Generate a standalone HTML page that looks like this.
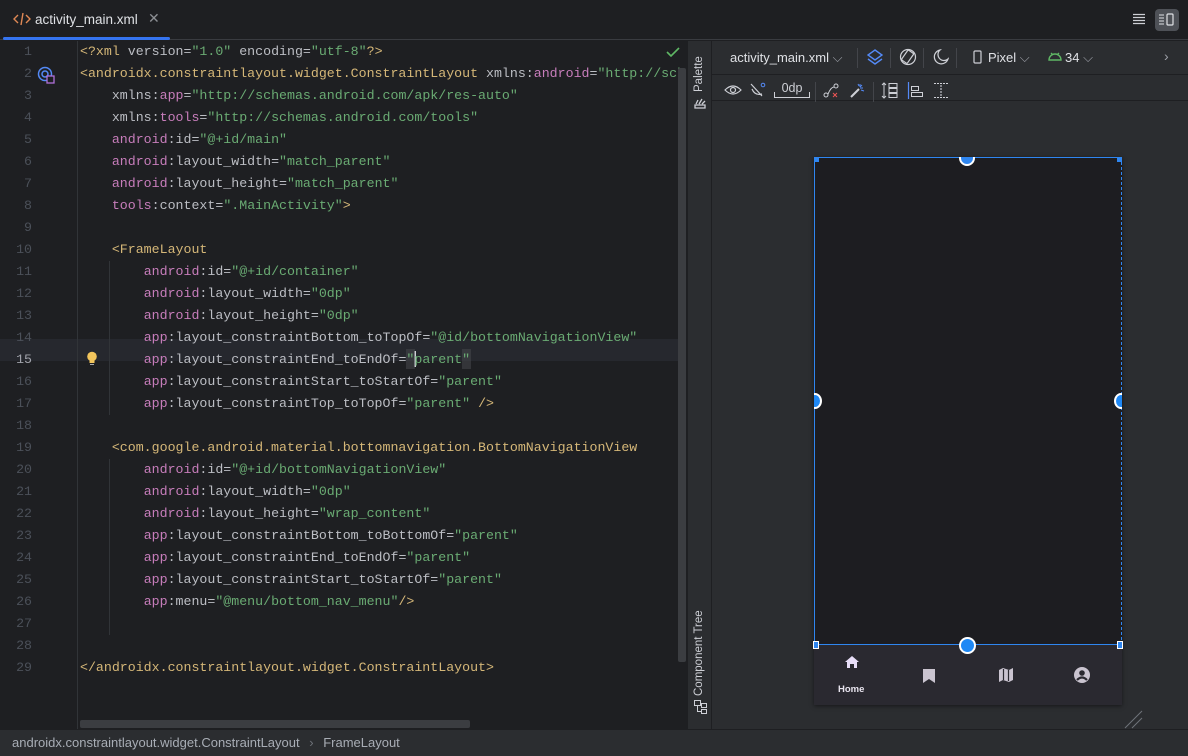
<!DOCTYPE html>
<html><head><meta charset="utf-8"><style>
*{margin:0;padding:0;box-sizing:border-box}
body{width:1188px;height:756px;background:#1e1f22;overflow:hidden;position:relative;font-family:"Liberation Sans",sans-serif;color:#dfe1e5}
.abs{position:absolute}
#tabs{left:0;top:0;width:1188px;height:40px;background:#1e1f22;border-bottom:1px solid #393b40}
#tab{left:3px;top:0;width:167px;height:40px}
#tab .ul{position:absolute;left:0;bottom:0;width:167px;height:3px;background:#3574f0;border-radius:2px}
#code{left:0;top:41px;width:686px;height:688px;overflow:hidden;font-family:"Liberation Mono",monospace;font-size:13.27px}
.ln{position:absolute;left:0;width:686px;height:22px;line-height:22px;white-space:pre}
.num{position:absolute;right:654px;width:40px;text-align:right;color:#4b5059}
.txt{position:absolute;left:80px;color:#bcbec4}
.t{color:#d5b778}.ns{color:#c77dbb}.s{color:#6aab73}
.g{position:absolute;width:1px;background:#313438}
#strip{left:687px;top:41px;width:25px;height:688px;background:#2b2d30;border-left:1px solid #1e1f22;border-right:1px solid #1e1f22}
#design{left:712px;top:41px;width:476px;height:688px;background:#2b2d30}
.vt{position:absolute;transform:rotate(-90deg);transform-origin:left top;font-size:11.5px;color:#ced0d6;white-space:nowrap}
#status{left:0;top:729px;width:1188px;height:27px;background:#2b2d30;border-top:1px solid #1e1f22;font-size:13px;color:#a8adb5;line-height:26px;padding-left:12px}
.tb{font-size:13px;color:#dfe1e5}
</style></head><body>
<div id="tabs" class="abs">
 <div id="tab" class="abs">
  <svg class="abs" style="left:10px;top:12px" width="18" height="14" viewBox="0 0 18 14"><path d="M5 3 L1 7 L5 11 M13 3 L17 7 L13 11 M10 1 L8 13" fill="none" stroke="#e08855" stroke-width="1.4"/></svg>
  <div class="abs" style="left:32px;top:12px;font-size:13.5px;color:#dfe1e5">activity_main.xml</div>
  <div class="abs" style="left:145px;top:10px;font-size:14px;color:#8c8f94">✕</div>
  <div class="ul"></div>
 </div>
 <svg class="abs" style="left:1133px;top:13px" width="12" height="12"><path d="M0 1.5h12M0 4.5h12M0 7.5h12M0 10.5h12" stroke="#ced0d6" stroke-width="1.2"/></svg>
 <div class="abs" style="left:1155px;top:9px;width:24px;height:22px;background:#4e5157;border-radius:4px"></div>
 <svg class="abs" style="left:1159px;top:13px" width="16" height="14"><path d="M0 2h5M0 5h5M0 8h5M0 11h5" stroke="#dfe1e5" stroke-width="1.1"/><rect x="8" y="1" width="6" height="11" rx="1" fill="none" stroke="#dfe1e5" stroke-width="1.2"/></svg>
</div>

<div id="code" class="abs">
 <div class="ln" style="top:298px;background:#26282e"></div>
 <div class="g" style="left:77px;top:0;height:688px"></div>
 <div class="g" style="left:109px;top:220px;height:154px"></div>
 <div class="g" style="left:109px;top:418px;height:176px"></div>
 <div class="abs" style="left:80px;top:679px;width:390px;height:8px;background:#3b3d41;border-radius:2px"></div>
 <svg class="abs" style="left:666px;top:6px" width="14" height="10"><path d="M1 5 L5 9 L13 1" fill="none" stroke="#5fb865" stroke-width="1.6"/></svg>
 <svg class="abs" style="left:37px;top:25px" width="18" height="18"><circle cx="8" cy="8" r="6.5" fill="none" stroke="#548af7" stroke-width="1.5"/><circle cx="8" cy="8" r="3" fill="none" stroke="#548af7" stroke-width="1.5"/><rect x="10" y="10" width="7" height="7" fill="#1e1f22" stroke="#b070d8" stroke-width="1.3"/></svg>
 <svg class="abs" style="left:86px;top:310px" width="12" height="16"><circle cx="6" cy="5.5" r="4.8" fill="#f2c55c"/><rect x="3.5" y="9" width="5" height="3" fill="#f2c55c"/><path d="M4 13.5h4" stroke="#aaa" stroke-width="1"/></svg>
 <div class="abs" style="left:414px;top:310px;width:1.5px;height:16px;background:#ced0d6"></div>
 <div class="abs" style="left:406px;top:308px;width:9px;height:20px;background:#43454a;opacity:.6"></div>
 <div class="abs" style="left:462px;top:308px;width:9px;height:20px;background:#43454a;opacity:.6"></div>
</div>
<div id="lines" class="abs" style="left:0;top:41px;width:686px;height:688px;overflow:hidden;font-family:'Liberation Mono',monospace;font-size:13.27px">
<div class="ln" style="top:0"><span class="num">1</span><span class="txt"><span class="t">&lt;?xml </span>version=<span class="s">"1.0"</span> encoding=<span class="s">"utf-8"</span><span class="t">?&gt;</span></span></div>
<div class="ln" style="top:22px"><span class="num">2</span><span class="txt"><span class="t">&lt;androidx.constraintlayout.widget.ConstraintLayout </span>xmlns:<span class="ns">android</span>=<span class="s">"http://schemas.android.com/apk/res/android"</span></span></div>
<div class="ln" style="top:44px"><span class="num">3</span><span class="txt">    xmlns:<span class="ns">app</span>=<span class="s">"http://schemas.android.com/apk/res-auto"</span></span></div>
<div class="ln" style="top:66px"><span class="num">4</span><span class="txt">    xmlns:<span class="ns">tools</span>=<span class="s">"http://schemas.android.com/tools"</span></span></div>
<div class="ln" style="top:88px"><span class="num">5</span><span class="txt">    <span class="ns">android</span>:id=<span class="s">"@+id/main"</span></span></div>
<div class="ln" style="top:110px"><span class="num">6</span><span class="txt">    <span class="ns">android</span>:layout_width=<span class="s">"match_parent"</span></span></div>
<div class="ln" style="top:132px"><span class="num">7</span><span class="txt">    <span class="ns">android</span>:layout_height=<span class="s">"match_parent"</span></span></div>
<div class="ln" style="top:154px"><span class="num">8</span><span class="txt">    <span class="ns">tools</span>:context=<span class="s">".MainActivity"</span><span class="t">&gt;</span></span></div>
<div class="ln" style="top:176px"><span class="num">9</span></div>
<div class="ln" style="top:198px"><span class="num">10</span><span class="txt">    <span class="t">&lt;FrameLayout</span></span></div>
<div class="ln" style="top:220px"><span class="num">11</span><span class="txt">        <span class="ns">android</span>:id=<span class="s">"@+id/container"</span></span></div>
<div class="ln" style="top:242px"><span class="num">12</span><span class="txt">        <span class="ns">android</span>:layout_width=<span class="s">"0dp"</span></span></div>
<div class="ln" style="top:264px"><span class="num">13</span><span class="txt">        <span class="ns">android</span>:layout_height=<span class="s">"0dp"</span></span></div>
<div class="ln" style="top:286px"><span class="num">14</span><span class="txt">        <span class="ns">app</span>:layout_constraintBottom_toTopOf=<span class="s">"@id/bottomNavigationView"</span></span></div>
<div class="ln" style="top:308px"><span class="num" style="color:#a1a3ab">15</span><span class="txt">        <span class="ns">app</span>:layout_constraintEnd_toEndOf=<span class="s">"parent"</span></span></div>
<div class="ln" style="top:330px"><span class="num">16</span><span class="txt">        <span class="ns">app</span>:layout_constraintStart_toStartOf=<span class="s">"parent"</span></span></div>
<div class="ln" style="top:352px"><span class="num">17</span><span class="txt">        <span class="ns">app</span>:layout_constraintTop_toTopOf=<span class="s">"parent"</span> <span class="t">/&gt;</span></span></div>
<div class="ln" style="top:374px"><span class="num">18</span></div>
<div class="ln" style="top:396px"><span class="num">19</span><span class="txt">    <span class="t">&lt;com.google.android.material.bottomnavigation.BottomNavigationView</span></span></div>
<div class="ln" style="top:418px"><span class="num">20</span><span class="txt">        <span class="ns">android</span>:id=<span class="s">"@+id/bottomNavigationView"</span></span></div>
<div class="ln" style="top:440px"><span class="num">21</span><span class="txt">        <span class="ns">android</span>:layout_width=<span class="s">"0dp"</span></span></div>
<div class="ln" style="top:462px"><span class="num">22</span><span class="txt">        <span class="ns">android</span>:layout_height=<span class="s">"wrap_content"</span></span></div>
<div class="ln" style="top:484px"><span class="num">23</span><span class="txt">        <span class="ns">app</span>:layout_constraintBottom_toBottomOf=<span class="s">"parent"</span></span></div>
<div class="ln" style="top:506px"><span class="num">24</span><span class="txt">        <span class="ns">app</span>:layout_constraintEnd_toEndOf=<span class="s">"parent"</span></span></div>
<div class="ln" style="top:528px"><span class="num">25</span><span class="txt">        <span class="ns">app</span>:layout_constraintStart_toStartOf=<span class="s">"parent"</span></span></div>
<div class="ln" style="top:550px"><span class="num">26</span><span class="txt">        <span class="ns">app</span>:menu=<span class="s">"@menu/bottom_nav_menu"</span><span class="t">/&gt;</span></span></div>
<div class="ln" style="top:572px"><span class="num">27</span></div>
<div class="ln" style="top:594px"><span class="num">28</span></div>
<div class="ln" style="top:616px"><span class="num">29</span><span class="txt"><span class="t">&lt;/androidx.constraintlayout.widget.ConstraintLayout&gt;</span></span></div>
</div>
<div class="abs" style="left:678px;top:68px;width:8px;height:594px;background:#3b3d41;border-radius:2px"></div>

<div id="strip" class="abs">
 <div class="vt" style="left:5px;top:51px">Palette</div>
 <svg class="abs" style="left:6px;top:56px" width="12" height="12"><path d="M1 11h10v-3h-10z M2 7l2-4 M5 7l3-5 M8 7l3-3" stroke="#ced0d6" stroke-width="1.3" fill="none"/></svg>
 <div class="vt" style="left:5px;top:655px">Component Tree</div>
 <svg class="abs" style="left:6px;top:659px" width="14" height="14"><rect x="0.5" y="0.5" width="6" height="5" fill="none" stroke="#ced0d6"/><rect x="7.5" y="3.5" width="5" height="4" fill="none" stroke="#ced0d6"/><rect x="7.5" y="9.5" width="5" height="4" fill="none" stroke="#ced0d6"/><path d="M3.5 6v5.5h4" fill="none" stroke="#ced0d6"/></svg>
</div>

<div id="design" class="abs">
 <div class="abs" style="left:0;top:0;width:476px;height:34px;border-bottom:1px solid #1e1f22"></div>
 <div class="abs" style="left:0;top:34px;width:476px;height:26px;border-bottom:1px solid #1e1f22"></div>
 <div class="abs tb" style="left:18px;top:9px">activity_main.xml <span style="color:#9da0a8">⌵</span></div>
 <div class="abs" style="left:145px;top:7px;width:1px;height:20px;background:#43454a"></div>
 <svg class="abs" style="left:155px;top:8px" width="16" height="18"><path d="M8 1L15 6L8 11L1 6Z" fill="none" stroke="#548af7" stroke-width="1.4"/><path d="M1 10L8 15L15 10" fill="none" stroke="#548af7" stroke-width="1.4"/></svg>
 <div class="abs" style="left:178px;top:7px;width:1px;height:20px;background:#43454a"></div>
 <svg class="abs" style="left:187px;top:7px" width="18" height="18"><circle cx="9" cy="9" r="7.5" fill="none" stroke="#ced0d6" stroke-width="1.2"/><rect x="5" y="3" width="7" height="12" rx="1" transform="rotate(35 9 9)" fill="none" stroke="#ced0d6" stroke-width="1.2"/></svg>
 <div class="abs" style="left:211px;top:7px;width:1px;height:20px;background:#43454a"></div>
 <svg class="abs" style="left:221px;top:8px" width="16" height="16"><path d="M7 1A7 7 0 1 0 15 10A6 6 0 0 1 7 1Z" fill="none" stroke="#ced0d6" stroke-width="1.2"/></svg>
 <div class="abs" style="left:244px;top:7px;width:1px;height:20px;background:#43454a"></div>
 <svg class="abs" style="left:261px;top:9px" width="10" height="15"><rect x="1" y="1" width="7" height="12" rx="1" fill="none" stroke="#ced0d6" stroke-width="1.2"/></svg>
 <div class="abs tb" style="left:276px;top:9px">Pixel <span style="color:#9da0a8">⌵</span></div>
 <svg class="abs" style="left:336px;top:10px" width="14" height="10"><path d="M1 9a6 6 0 0 1 12 0z" fill="none" stroke="#5fb865" stroke-width="1.4"/><path d="M3 2l2 2M11 2l-2 2" stroke="#5fb865" stroke-width="1.3"/></svg>
 <div class="abs tb" style="left:353px;top:9px">34 <span style="color:#9da0a8">⌵</span></div>
 <div class="abs" style="left:452px;top:7px;font-size:14px;color:#9da0a8">›</div>
 <svg class="abs" style="left:12px;top:42px" width="18" height="14"><path d="M1 7Q9 -1 17 7Q9 15 1 7Z" fill="none" stroke="#ced0d6" stroke-width="1.2"/><circle cx="9" cy="7" r="2.5" fill="none" stroke="#ced0d6" stroke-width="1.2"/></svg>
 <svg class="abs" style="left:38px;top:41px" width="16" height="16"><path d="M1 2L12 14M2 7Q5 14 12 12" fill="none" stroke="#ced0d6" stroke-width="1.2"/><circle cx="13" cy="3" r="1.8" fill="none" stroke="#548af7"/></svg>
 <div class="abs" style="left:62px;top:40px;width:36px;height:17px;border-bottom:1px solid #ced0d6;font-size:12.5px;color:#ced0d6;text-align:center">0dp</div>
 <div class="abs" style="left:62px;top:51px;width:1px;height:6px;background:#ced0d6"></div><div class="abs" style="left:97px;top:51px;width:1px;height:6px;background:#ced0d6"></div>
 <div class="abs" style="left:103px;top:41px;width:1px;height:20px;background:#43454a"></div>
 <svg class="abs" style="left:111px;top:42px" width="16" height="16"><circle cx="3" cy="12" r="2" fill="none" stroke="#ced0d6"/><circle cx="13" cy="3" r="2" fill="none" stroke="#ced0d6"/><path d="M5 11Q8 4 11 4" fill="none" stroke="#ced0d6"/><path d="M10 10l4 4M14 10l-4 4" stroke="#e55"/></svg>
 <svg class="abs" style="left:137px;top:42px" width="16" height="16"><path d="M2 14L10 6" stroke="#ced0d6" stroke-width="2"/><path d="M11 1v3M14 5h-3M13 2l-2 2M9 1l1 2M15 8l-3-1" stroke="#548af7"/></svg>
 <div class="abs" style="left:161px;top:41px;width:1px;height:20px;background:#43454a"></div>
 <svg class="abs" style="left:169px;top:41px" width="18" height="18"><path d="M3 1v15M1 3l2-2 2 2M1 14l2 2 2-2" fill="none" stroke="#ced0d6"/><rect x="8" y="1.5" width="8" height="4" fill="none" stroke="#ced0d6"/><rect x="8" y="6.5" width="8" height="4" fill="none" stroke="#ced0d6"/><rect x="8" y="11.5" width="8" height="4" fill="none" stroke="#ced0d6"/></svg>
 <svg class="abs" style="left:195px;top:41px" width="18" height="18"><path d="M1.5 0v17" stroke="#548af7" stroke-width="1.2"/><rect x="4.5" y="4.5" width="7" height="4" fill="none" stroke="#ced0d6"/><rect x="4.5" y="10.5" width="11" height="4" fill="none" stroke="#ced0d6"/></svg>
 <svg class="abs" style="left:221px;top:41px" width="18" height="18"><path d="M1 1.5h14M1 15.5h14M8 3v11" stroke="#ced0d6" stroke-dasharray="2 1" stroke-width="1.1"/></svg>
 <div class="abs" style="left:102px;top:116px;width:308px;height:548px;background:#1d1d21;box-shadow:0 1px 4px rgba(0,0,0,.5)"></div>
 <div class="abs" style="left:102px;top:604px;width:308px;height:60px;background:#2a2930"></div>
 <div class="abs" style="left:102px;top:116px;width:308px;height:488px;border:1px solid #2f86f0;border-right:1px dashed #2f86f0"></div>
 <div class="abs" style="left:102px;top:116px;width:5px;height:5px;background:#2f86f0"></div>
 <div class="abs" style="left:405px;top:116px;width:5px;height:5px;background:#2f86f0"></div>
 <div class="abs" style="left:101px;top:600px;width:6px;height:8px;background:#2f86f0;border:1px solid #fff"></div>
 <div class="abs" style="left:405px;top:600px;width:6px;height:8px;background:#2f86f0;border:1px solid #fff"></div>
 <div class="abs" style="left:247px;top:109px;width:16px;height:16px;border-radius:50%;background:#2f86f0;border:2px solid #fff;clip-path:inset(7px 0 0 0)"></div>
 <div class="abs" style="left:247px;top:596px;width:17px;height:17px;border-radius:50%;background:#1e88f5;border:2px solid #fff"></div>
 <div class="abs" style="left:96px;top:352px;width:14px;height:16px;border-radius:50%;background:#1e88f5;border:2px solid #fff;clip-path:inset(0 0 0 6px)"></div>
 <div class="abs" style="left:402px;top:352px;width:14px;height:16px;border-radius:50%;background:#1e88f5;border:2px solid #fff;clip-path:inset(0 6px 0 0)"></div>
 <svg class="abs" style="left:133px;top:615px" width="14" height="12"><path d="M7 0L14 6H12V12H9V8H5V12H2V6H0Z" fill="#e8def8"/></svg>
 <div class="abs" style="left:126px;top:643px;font-size:9.5px;font-weight:bold;color:#e8e4ee">Home</div>
 <svg class="abs" style="left:211px;top:628px" width="12" height="14"><path d="M0 0H12V14L6 10L0 14Z" fill="#cac4d0"/></svg>
 <svg class="abs" style="left:287px;top:627px" width="14" height="14"><path d="M0 2L4 0L10 2L14 0V12L10 14L4 12L0 14Z" fill="#cac4d0"/><path d="M4.5 1v11M9.5 2v11" stroke="#2a2930" stroke-width="1.2"/></svg>
 <svg class="abs" style="left:362px;top:626px" width="16" height="16"><circle cx="8" cy="8" r="8" fill="#cac4d0"/><circle cx="8" cy="6" r="2.8" fill="#2a2930"/><path d="M3 13Q8 8 13 13" stroke="#2a2930" stroke-width="2.2" fill="none"/></svg>
 <svg class="abs" style="left:412px;top:668px" width="20" height="20"><path d="M1 19L18 2M8 19L18 9" stroke="#6f737a"/></svg>
</div>

<div id="status" class="abs">androidx.constraintlayout.widget.ConstraintLayout <span style="color:#6f737a;margin:0 6px">›</span> FrameLayout</div>
</body></html>
